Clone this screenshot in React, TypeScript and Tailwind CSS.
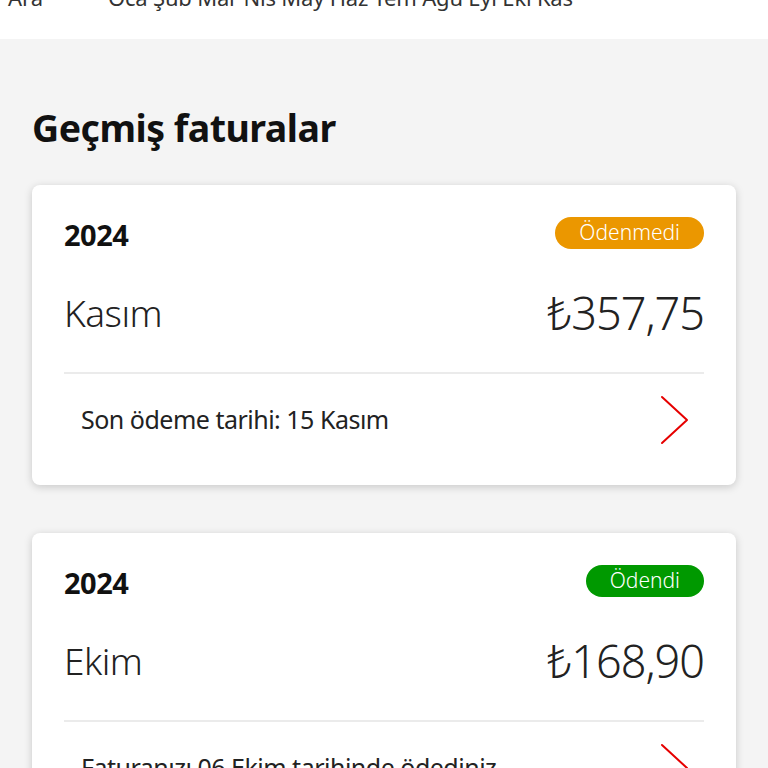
import React from "react";

const font = { fontFamily: '"Noto Sans", "Open Sans", sans-serif' };

function Chevron() {
  return (
    <svg width="30" height="50" viewBox="0 0 30 50" fill="none">
      <path d="M2 2 L27 25 L2 48" stroke="#e60000" strokeWidth="2" strokeLinecap="round" strokeLinejoin="round" />
    </svg>
  );
}

function Card({ badge, badgeClass, month, amount, note }: { badge: string; badgeClass: string; month: string; amount: string; note: string }) {
  return (
    <div className="bg-white rounded-lg shadow-[0_2px_8px_rgba(0,0,0,0.18)] px-8 pt-8 pb-[40px]">
      <div className="flex items-center justify-between h-8">
        <span className="text-[29px] font-bold text-[#111] tracking-[-0.5px] mt-[3px]">2024</span>
        <span className={`h-8 rounded-full px-[24px] flex items-center text-[21px] text-white font-light ${badgeClass}`}>{badge}</span>
      </div>
      <div className="flex items-center justify-between h-[60px] mt-[34px]">
        <span className="text-[37px] font-light text-[#222] tracking-[-0.5px]">{month}</span>
        <span className="text-[45px] font-light text-[#222] tracking-[-1px]">{amount}</span>
      </div>
      <div className="h-[2px] bg-[#ebebeb] mt-[29px]"></div>
      <div className="flex items-center justify-between mt-[21px] pl-[17px] pr-[14px] h-[50px]">
        <span className="text-[25px] text-[#222] tracking-[-0.5px]">{note}</span>
        <Chevron />
      </div>
    </div>
  );
}

export default function App() {
  return (
    <div className="w-[768px] h-[768px] overflow-hidden bg-[#f4f4f4]" style={font}>
      <div className="bg-white h-[39px] overflow-hidden">
        <div className="flex text-[22px] text-[#333] -mt-[19px] leading-[32px]">
          <span className="pl-[8px] w-[108px]">Ara</span>
          <span className="tracking-[-0.2px]">Oca Şub Mar Nis May Haz Tem Ağu Eyl Eki Kas</span>
        </div>
      </div>
      <div className="px-8">
        <h1 className="text-[37.5px] font-bold text-[#111] mt-[64px] leading-[50px] tracking-[-0.5px]">Geçmiş faturalar</h1>
        <div className="mt-[32px] flex flex-col gap-12">
          <Card badge="Ödenmedi" badgeClass="bg-[#eb9700]" month="Kasım" amount="₺357,75" note="Son ödeme tarihi: 15 Kasım" />
          <Card badge="Ödendi" badgeClass="bg-[#009900]" month="Ekim" amount="₺168,90" note="Faturanızı 06 Ekim tarihinde ödediniz" />
        </div>
      </div>
    </div>
  );
}
